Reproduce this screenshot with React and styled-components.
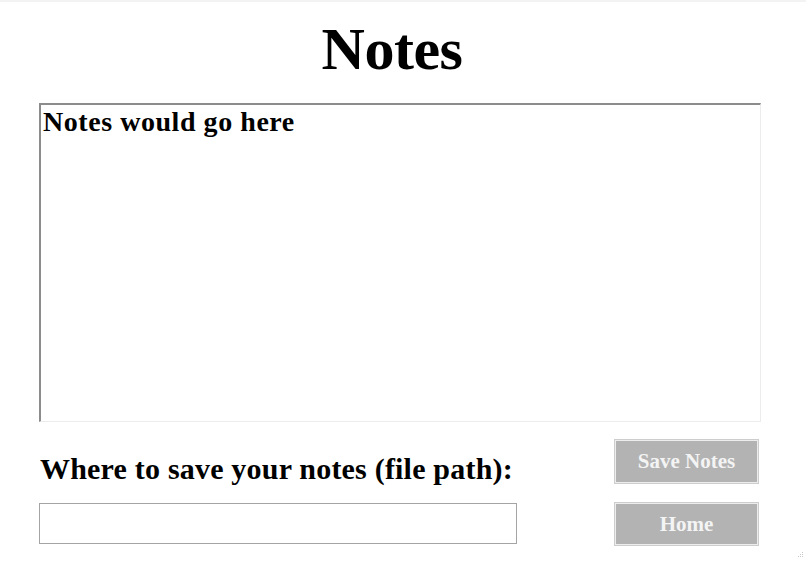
import React, { useEffect, useRef } from 'react';
import styled, { createGlobalStyle } from 'styled-components';

const GlobalStyle = createGlobalStyle`
  html, body {
    margin: 0;
    padding: 0;
    background: #ffffff;
  }
  body {
    font-family: 'Liberation Serif', 'Times New Roman', serif;
    color: #000;
  }
`;

const Page = styled.div`
  position: relative;
  width: 806px;
  height: 561px;
  box-sizing: border-box;
  border-top: 2px solid #f3f3f3;
  padding: 17px 45px 0 39px;
  overflow: hidden;
`;

const Title = styled.h1`
  margin: 0;
  text-align: center;
  font-size: 60px;
  line-height: 60px;
  font-weight: bold;
  letter-spacing: -0.5px;
  padding-right: 16px;
`;

const NotesArea = styled.textarea`
  display: block;
  box-sizing: border-box;
  width: 722px;
  height: 319px;
  margin: 24px 0 0;
  padding: 3px 2px 1px;
  resize: none;
  outline: none;
  font-family: 'Liberation Serif', 'Times New Roman', serif;
  font-weight: bold;
  font-size: 28px;
  line-height: 28px;
  letter-spacing: 0.55px;
  color: #000;
  background: #fff;
  caret-color: #000;
  border-style: solid;
  border-width: 2px 1px 1px 2px;
  border-color: #8c8c8c #ececec #ececec #8c8c8c;
`;

const Controls = styled.div`
  display: grid;
  grid-template-columns: 478px 145px;
  grid-template-rows: 45px 44px;
  column-gap: 97px;
  row-gap: 18px;
  margin-top: 17px;
`;

const Label = styled.label`
  align-self: end;
  font-size: 30px;
  line-height: 30px;
  font-weight: bold;
  letter-spacing: 0.2px;
  white-space: nowrap;
  padding-left: 1px;
`;

const PathInput = styled.input`
  align-self: start;
  box-sizing: border-box;
  width: 478px;
  height: 41px;
  margin-top: 1px;
  padding: 0 6px;
  font-family: 'Liberation Serif', 'Times New Roman', serif;
  font-size: 22px;
  border: 1px solid #a4a4a4;
  outline: none;
  background: #fff;
`;

const Button = styled.button`
  box-sizing: border-box;
  width: 145px;
  height: ${props => props.tall ? '45px' : '44px'};
  padding: 0;
  border: 1px solid #cdcdcd;
  box-shadow: inset 0 0 0 1px #ededed;
  background: #b3b3b3;
  color: #f4f4f4;
  font-family: 'Liberation Serif', 'Times New Roman', serif;
  font-weight: bold;
  font-size: 21px;
  cursor: pointer;
`;

const Grip = styled.svg`
  position: absolute;
  right: 2px;
  bottom: 3px;
`;

const App = () => {
  const areaRef = useRef(null);

  useEffect(() => {
    const el = areaRef.current;
    if (el) {
      el.focus();
      const end = el.value.length;
      el.setSelectionRange(end, end);
    }
  }, []);

  return (
    <>
      <GlobalStyle />
      <Page>
        <Title>Notes</Title>
        <NotesArea ref={areaRef} defaultValue="Notes would go here" spellCheck={false} />
        <Controls>
          <Label htmlFor="path">Where to save your notes (file path):</Label>
          <Button tall>Save Notes</Button>
          <PathInput id="path" type="text" />
          <Button>Home</Button>
        </Controls>
        <Grip width="6" height="6" viewBox="0 0 6 6">
          <rect x="4" y="0" width="1" height="1" fill="#c8c8c8" />
          <rect x="2" y="2" width="1" height="1" fill="#c8c8c8" />
          <rect x="4" y="2" width="1" height="1" fill="#c8c8c8" />
          <rect x="0" y="4" width="1" height="1" fill="#c8c8c8" />
          <rect x="2" y="4" width="1" height="1" fill="#c8c8c8" />
          <rect x="4" y="4" width="1" height="1" fill="#c8c8c8" />
        </Grip>
      </Page>
    </>
  );
};

export default App;
